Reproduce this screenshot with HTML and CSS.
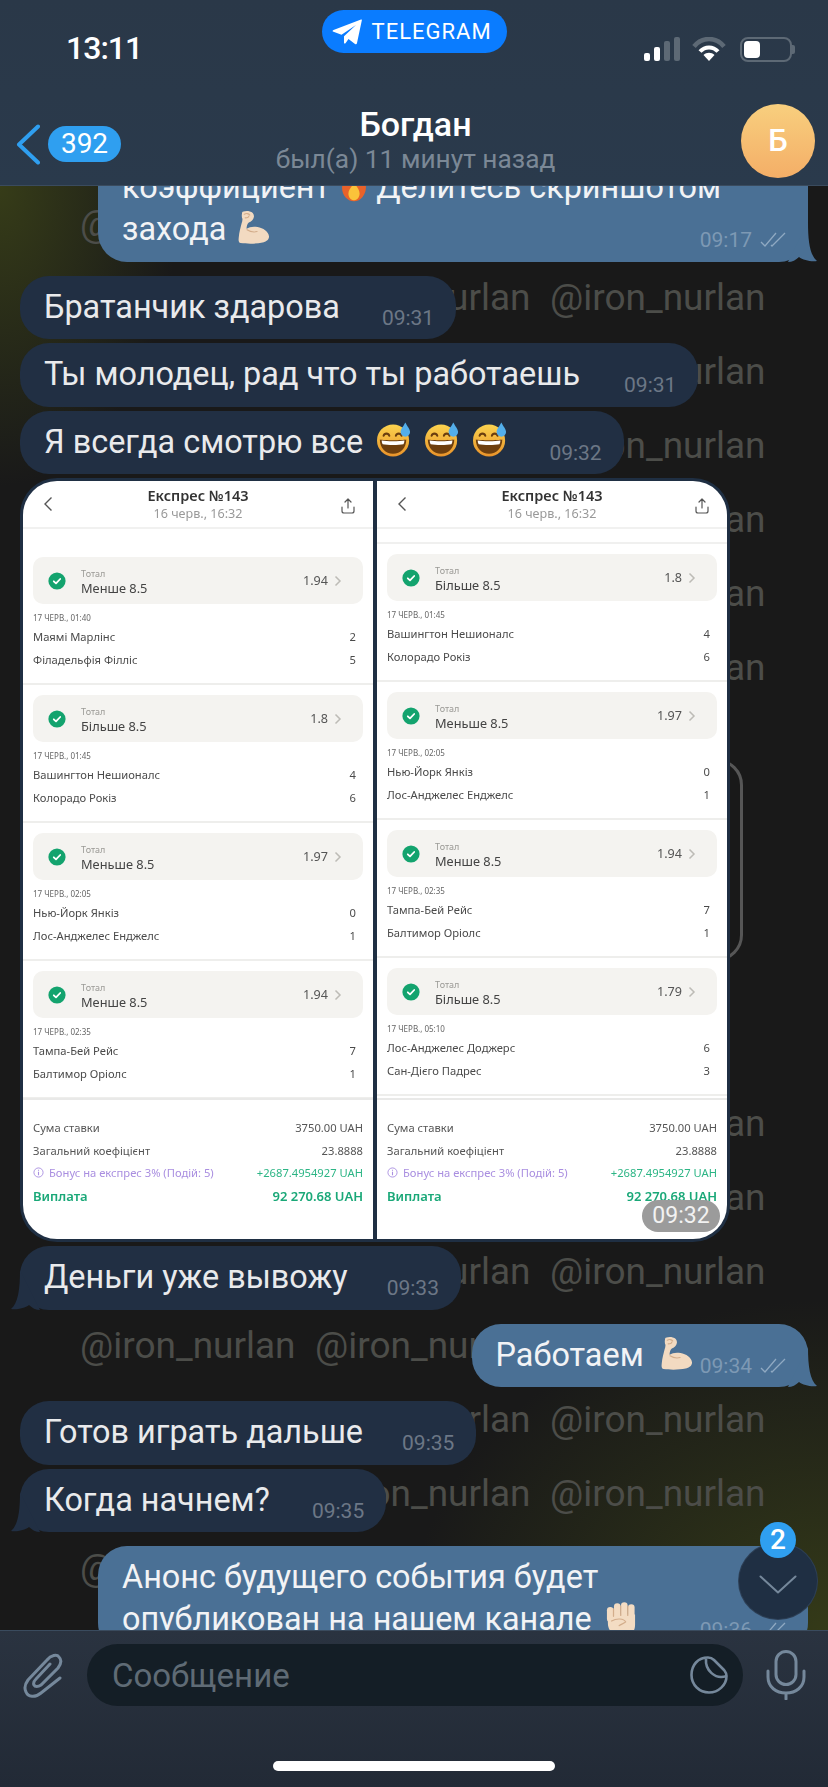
FILE: index.html

```html
<!DOCTYPE html>
<html lang="ru">
<head>
  <meta charset="UTF-8">
  <title>Богдан</title>
  <link rel="stylesheet" href="styles.css">
</head>
<body>
  <svg class="defs" width="0" height="0">
    <defs>
      <linearGradient id="face" x1="0" y1="0" x2="0" y2="1">
        <stop offset="0" stop-color="#fbd34f"/>
        <stop offset="1" stop-color="#e9932a"/>
      </linearGradient>
      <symbol id="muscle" viewBox="0 0 36 36">
        <path fill="#f2dac1" d="M6 3C7 1 11 0 15 1c3 .5 5 3 4.500 6-.5 3-3 5-5.500 6-1.500 1-2.500 4-2.500 7 3-2 7-3 12-2 6 1 12 5 12.500 10 .3 4-3 6-7 7-7 1.500-17 1.500-24 .5-2-.5-2.500-2-2-6 .5-6 2-11 3-15 1-3 1.500-5 .5-7-.5-3 0-5 1-7z"/>
        <path fill="none" stroke="#d3ad8b" stroke-width="1.200" stroke-linecap="round" d="M9 4c2-1 5-1 6 1M10 8c2 0 4 0 4-2M12 21c3 2 7 3 11 2"/>
      </symbol>
      <symbol id="fist" viewBox="0 0 32 40">
        <g fill="#f3dcc3">
          <rect x="1" y="5" width="7" height="16" rx="3.500"/>
          <rect x="8.500" y="1" width="7" height="16" rx="3.500"/>
          <rect x="16" y="0" width="7" height="16" rx="3.500"/>
          <rect x="23.500" y="2" width="7" height="16" rx="3.500"/>
          <path d="M2 13h29v11c0 6-3 9-5 11v5H8v-6c-4-3-6-7-6-12z"/>
        </g>
        <path fill="none" stroke="#d3ad8b" stroke-width="1.300" stroke-linecap="round" d="M8 7v8M15.700 4v10M23.200 4v10M6 20c5-3 13-3 15 1-2 2-5 2-7 4"/>
      </symbol>
      <symbol id="sweat" viewBox="0 0 36 36">
        <circle cx="17" cy="19" r="17" fill="url(#face)"/>
        <path fill="#6e3f0e" d="M3 18c4 1 24 1 28 0 0 9-6 15-14 15S3 27 3 18z"/>
        <path fill="#fff" d="M5 19c5 1 19 1 24 0 0 2-.5 3-1 4-5 1-17 1-22 0-.5-1-1-2-1-4z"/>
        <path fill="none" stroke="#6b3e0f" stroke-width="2.200" stroke-linecap="round" d="M7 14c1-3 5-3 6 0M20 14c1-3 5-3 6 0"/>
        <path fill="#53aeea" d="M30 0c2 4 5 7 5 10a5 5 0 0 1-10 0c0-3 3-6 5-10z"/>
      </symbol>
      <symbol id="fire" viewBox="0 0 30 36">
        <path fill="#e8622a" d="M15 0c2 6 9 9 12 16 3 9-3 20-12 20S0 26 3 17c1-3 3-5 4-7 1 3 2 4 4 5 1-5 1-10 4-15z"/>
        <path fill="#fbc33a" d="M15 15c1 4 6 7 6 13 0 4-3 7-6 7s-6-3-6-7c0-6 5-8 6-13z"/>
      </symbol>
      <symbol id="checks" viewBox="0 0 26 16">
        <path fill="none" stroke="currentColor" stroke-width="1.300" d="M1 10l4 4L16 1M11 13l1 1L25 1"/>
      </symbol>
      <symbol id="tail" viewBox="0 0 30 40">
        <path fill="currentColor" d="M20 0C20 20 22 33 29 39 23 40 15 38 11 35 8 38 4 40 0 40Z"/>
      </symbol>
      <symbol id="ok" viewBox="0 0 18 18">
        <circle cx="9" cy="9" r="8.600" fill="#13a36e"/>
        <path fill="none" stroke="#fff" stroke-width="1.800" stroke-linecap="round" stroke-linejoin="round" d="M5.800 9.300l2.200 2.100 4.200-4.400"/>
      </symbol>
      <symbol id="back-thin" viewBox="0 0 10 16">
        <path fill="none" stroke="#555" stroke-width="1.400" d="M8.500 1.500L2 8l6.500 6.500"/>
      </symbol>
      <symbol id="share" viewBox="0 0 14 16">
        <path fill="none" stroke="#555" stroke-width="1.200" stroke-linecap="round" stroke-linejoin="round" d="M7 10V1.500M4 4l3-3 3 3M1 9v4a2 2 0 0 0 2 2h8a2 2 0 0 0 2-2V9"/>
      </symbol>
      <symbol id="next" viewBox="0 0 8 12">
        <path fill="none" stroke="#bdbbb6" stroke-width="1.500" d="M1.500 1.500L6 6l-4.500 4.500"/>
      </symbol>
      <symbol id="info" viewBox="0 0 12 12">
        <circle cx="6" cy="6" r="5" fill="none" stroke="#a98ee0" stroke-width="1"/>
        <path fill="none" stroke="#a98ee0" stroke-width="1.200" d="M6 5.200V9M6 3v1.200"/>
      </symbol>
    </defs>
  </svg>

  <header class="top">
    <div class="status">
      <div class="clock">13:11</div>
      <div class="tg-pill">
        <svg class="plane" viewBox="0 0 30 26"><path fill="#fff" d="M29 .5c.8-.3 1 .4.800 1L25 24c-.2 1.200-1 1.500-2 .9l-6.500-5-3 4.300c-.6.700-1.500.4-1.500-.5v-6.500L24 6 9.500 15.800l-8-3c-1.200-.5-1.200-1.400 0-1.900z"/></svg>
        TELEGRAM
      </div>
      <div class="indicators">
        <div class="bars"><i class="on b1"></i><i class="on b2"></i><i class="b3"></i><i class="b4"></i></div>
        <svg class="wifi" viewBox="0 0 34 24">
          <path fill="none" stroke="#5d6975" stroke-width="4.500" d="M2 9.500C10-.5 24-.5 32 9.500"/>
          <path fill="none" stroke="#fff" stroke-width="4" d="M8 14.500c5-5.500 13-5.500 18 0"/>
          <path fill="#fff" d="M17 24l-5.500-6c3-3 8-3 11 0z"/>
        </svg>
        <div class="battery"><span></span></div>
      </div>
    </div>
    <div class="nav">
      <div class="back">
        <svg class="back-arrow" viewBox="0 0 24 41"><path fill="none" stroke="#2f9ff0" stroke-width="4" stroke-linecap="round" stroke-linejoin="round" d="M22 2.500L3 20.500l19 18"/></svg>
        <span class="counter">392</span>
      </div>
      <div class="peer">
        <div class="peer-name">Богдан</div>
        <div class="peer-seen">был(а) 11 минут назад</div>
      </div>
      <div class="avatar">Б</div>
    </div>
  </header>

  <main class="chat">
    <div class="marks">
      <div class="mark-row"><span>@iron_nurlan</span></div>
      <div class="mark-row"><span class="c2">@iron_nurlan</span><span>@iron_nurlan</span></div>
      <div class="mark-row"><span class="c3">@iron_nurlan</span></div>
      <div class="mark-row"><span class="c3">@iron_nurlan</span></div>
      <div class="mark-row"><span class="c3">@iron_nurlan</span></div>
      <div class="mark-row"><span class="c3">@iron_nurlan</span></div>
      <div class="mark-row"><span class="c3">@iron_nurlan</span></div>
      <div class="mark-frame"></div>
      <div class="mark-row after-frame"><span class="c3">@iron_nurlan</span></div>
      <div class="mark-row"><span class="c3">@iron_nurlan</span></div>
      <div class="mark-row"><span class="c2">@iron_nurlan</span><span>@iron_nurlan</span></div>
      <div class="mark-row"><span>@iron_nurlan</span><span>@iron_nurlan</span></div>
      <div class="mark-row"><span class="c2">@iron_nurlan</span><span>@iron_nurlan</span></div>
      <div class="mark-row"><span class="c2">@iron_nurlan</span><span>@iron_nurlan</span></div>
      <div class="mark-row"><span>@iron_nurlan</span></div>
    </div>

    <div class="msgs">
      <div class="msg out wide first">
        <div class="msg-text">коэффициент <svg class="emo fire"><use href="#fire"/></svg> Делитесь скриншотом<br>захода <svg class="emo arm"><use href="#muscle"/></svg></div>
        <div class="meta">09:17 <svg class="ticks"><use href="#checks"/></svg></div>
        <svg class="tail"><use href="#tail"/></svg>
      </div>

      <div class="msg in gap-big">
        <div class="msg-text">Братанчик здарова</div>
        <div class="meta">09:31</div>
      </div>
      <div class="msg in">
        <div class="msg-text">Ты молодец, рад что ты работаешь</div>
        <div class="meta roomy">09:31</div>
      </div>
      <div class="msg in">
        <div class="msg-text">Я всегда смотрю все <svg class="emo sw"><use href="#sweat"/></svg> <svg class="emo sw"><use href="#sweat"/></svg> <svg class="emo sw"><use href="#sweat"/></svg></div>
        <div class="meta">09:32</div>
      </div>

      <div class="album">
        <section class="panel">
          <div class="panel-head">
            <svg class="ico-back"><use href="#back-thin"/></svg>
            <div class="panel-title"><b>Експрес №143</b><span>16 черв., 16:32</span></div>
            <svg class="ico-share"><use href="#share"/></svg>
          </div>
          <div class="bets first-gap">
            <div class="bet">
              <div class="bet-card"><svg class="ico-ok"><use href="#ok"/></svg><div class="bet-name"><small>Тотал</small>Менше 8.5</div><div class="bet-odd">1.94</div><svg class="ico-next"><use href="#next"/></svg></div>
              <div class="bet-date">17 ЧЕРВ., 01:40</div>
              <div class="team"><span>Маямі Марлінс</span><span>2</span></div>
              <div class="team"><span>Філадельфія Філліс</span><span>5</span></div>
            </div>
            <div class="bet">
              <div class="bet-card"><svg class="ico-ok"><use href="#ok"/></svg><div class="bet-name"><small>Тотал</small>Більше 8.5</div><div class="bet-odd">1.8</div><svg class="ico-next"><use href="#next"/></svg></div>
              <div class="bet-date">17 ЧЕРВ., 01:45</div>
              <div class="team"><span>Вашингтон Нешионалс</span><span>4</span></div>
              <div class="team"><span>Колорадо Рокіз</span><span>6</span></div>
            </div>
            <div class="bet">
              <div class="bet-card"><svg class="ico-ok"><use href="#ok"/></svg><div class="bet-name"><small>Тотал</small>Меньше 8.5</div><div class="bet-odd">1.97</div><svg class="ico-next"><use href="#next"/></svg></div>
              <div class="bet-date">17 ЧЕРВ., 02:05</div>
              <div class="team"><span>Нью-Йорк Янкіз</span><span>0</span></div>
              <div class="team"><span>Лос-Анджелес Енджелс</span><span>1</span></div>
            </div>
            <div class="bet">
              <div class="bet-card"><svg class="ico-ok"><use href="#ok"/></svg><div class="bet-name"><small>Тотал</small>Менше 8.5</div><div class="bet-odd">1.94</div><svg class="ico-next"><use href="#next"/></svg></div>
              <div class="bet-date">17 ЧЕРВ., 02:35</div>
              <div class="team"><span>Тампа-Бей Рейс</span><span>7</span></div>
              <div class="team"><span>Балтимор Оріолс</span><span>1</span></div>
            </div>
          </div>
          <div class="summary">
            <div class="sum-row"><span>Сума ставки</span><span>3750.00 UAH</span></div>
            <div class="sum-row"><span>Загальний коефіцієнт</span><span>23.8888</span></div>
            <div class="sum-row bonus"><span><svg class="ico-info"><use href="#info"/></svg>Бонус на експрес 3% (Подій: 5)</span><em>+2687.4954927 UAH</em></div>
            <div class="sum-row total"><span>Виплата</span><span>92 270.68 UAH</span></div>
          </div>
        </section>

        <section class="panel">
          <div class="panel-head">
            <svg class="ico-back"><use href="#back-thin"/></svg>
            <div class="panel-title"><b>Експрес №143</b><span>16 черв., 16:32</span></div>
            <svg class="ico-share"><use href="#share"/></svg>
          </div>
          <div class="bets second-gap">
            <div class="bet">
              <div class="bet-card"><svg class="ico-ok"><use href="#ok"/></svg><div class="bet-name"><small>Тотал</small>Більше 8.5</div><div class="bet-odd">1.8</div><svg class="ico-next"><use href="#next"/></svg></div>
              <div class="bet-date">17 ЧЕРВ., 01:45</div>
              <div class="team"><span>Вашингтон Нешионалс</span><span>4</span></div>
              <div class="team"><span>Колорадо Рокіз</span><span>6</span></div>
            </div>
            <div class="bet">
              <div class="bet-card"><svg class="ico-ok"><use href="#ok"/></svg><div class="bet-name"><small>Тотал</small>Меньше 8.5</div><div class="bet-odd">1.97</div><svg class="ico-next"><use href="#next"/></svg></div>
              <div class="bet-date">17 ЧЕРВ., 02:05</div>
              <div class="team"><span>Нью-Йорк Янкіз</span><span>0</span></div>
              <div class="team"><span>Лос-Анджелес Енджелс</span><span>1</span></div>
            </div>
            <div class="bet">
              <div class="bet-card"><svg class="ico-ok"><use href="#ok"/></svg><div class="bet-name"><small>Тотал</small>Менше 8.5</div><div class="bet-odd">1.94</div><svg class="ico-next"><use href="#next"/></svg></div>
              <div class="bet-date">17 ЧЕРВ., 02:35</div>
              <div class="team"><span>Тампа-Бей Рейс</span><span>7</span></div>
              <div class="team"><span>Балтимор Оріолс</span><span>1</span></div>
            </div>
            <div class="bet">
              <div class="bet-card"><svg class="ico-ok"><use href="#ok"/></svg><div class="bet-name"><small>Тотал</small>Більше 8.5</div><div class="bet-odd">1.79</div><svg class="ico-next"><use href="#next"/></svg></div>
              <div class="bet-date">17 ЧЕРВ., 05:10</div>
              <div class="team"><span>Лос-Анджелес Доджерс</span><span>6</span></div>
              <div class="team"><span>Сан-Дієго Падрес</span><span>3</span></div>
            </div>
          </div>
          <div class="summary">
            <div class="sum-row"><span>Сума ставки</span><span>3750.00 UAH</span></div>
            <div class="sum-row"><span>Загальний коефіцієнт</span><span>23.8888</span></div>
            <div class="sum-row bonus"><span><svg class="ico-info"><use href="#info"/></svg>Бонус на експрес 3% (Подій: 5)</span><em>+2687.4954927 UAH</em></div>
            <div class="sum-row total"><span>Виплата</span><span>92 270.68 UAH</span></div>
          </div>
        </section>
        <div class="album-time">09:32</div>
      </div>

      <div class="msg in">
        <div class="msg-text">Деньги уже вывожу</div>
        <div class="meta tight">09:33</div>
        <svg class="tail"><use href="#tail"/></svg>
      </div>

      <div class="msg out gap-big">
        <div class="msg-text">Работаем <svg class="emo arm mg"><use href="#muscle"/></svg></div>
        <div class="meta">09:34 <svg class="ticks"><use href="#checks"/></svg></div>
        <svg class="tail"><use href="#tail"/></svg>
      </div>

      <div class="msg in gap-big">
        <div class="msg-text">Готов играть дальше</div>
        <div class="meta tight">09:35</div>
      </div>
      <div class="msg in">
        <div class="msg-text">Когда начнем?</div>
        <div class="meta">09:35</div>
        <svg class="tail"><use href="#tail"/></svg>
      </div>

      <div class="msg out wide gap-big">
        <div class="msg-text">Анонс будущего события будет<br>опубликован на нашем канале <svg class="emo fist"><use href="#fist"/></svg></div>
        <div class="meta">09:36 <svg class="ticks"><use href="#checks"/></svg></div>
      </div>
    </div>

    <div class="to-bottom">
      <span class="to-bottom-count">2</span>
      <svg class="to-bottom-arrow" viewBox="0 0 38 19"><path fill="none" stroke="#75889b" stroke-width="2" stroke-linecap="round" stroke-linejoin="round" d="M1.500 1.500L19 17.500 36.500 1.500"/></svg>
    </div>
  </main>

  <footer class="composer">
    <div class="composer-row">
      <svg class="ico-clip" viewBox="0 0 40 46"><path fill="none" stroke="#75889b" stroke-width="3" stroke-linecap="round" d="M37 26L18 41c-6 5-13 4-15-1-2-4-1-8 2-12L24 8c4-5 10-6 12-3 3 3 2 7-1 11L18 33c-3 2-6 2-7 0-1-2 0-4 2-6l14-15"/></svg>
      <div class="field">
        <span class="field-hint">Сообщение</span>
        <svg class="ico-sticker" viewBox="0 0 38 38"><path fill="none" stroke="#75889b" stroke-width="2.600" stroke-linejoin="round" d="M18 1.500C8 1.500 1.500 9 1.500 19c0 10 8 17.500 17.500 17.500S36.500 29 36.500 20c0-3-1-4-2.500-6L24 4c-2-2-4-2.500-6-2.500zM16 3c-1 11 9 21 20.500 17"/></svg>
      </div>
      <svg class="ico-mic" viewBox="0 0 40 50"><g fill="none" stroke="#75889b" stroke-width="3" stroke-linecap="round"><rect x="10" y="1.500" width="20" height="33" rx="10"/><path d="M2 21v6c0 10 8 16 18 16s18-6 18-16v-6M20 43v6"/></g></svg>
    </div>
    <div class="home-bar"></div>
  </footer>
</body>
</html>
```

FILE: styles.css

```css
* {
  box-sizing: border-box;
}
html, body {
  margin: 0;
  height: 1787px;
  overflow: hidden;
}
body {
  width: 828px;
  display: flex;
  flex-direction: column;
  background-color: #191919;
  font-family: Roboto, "Noto Sans", sans-serif;
  color: #fff;
}
.defs {
  position: absolute;
}

/* top bar */
.top {
  flex: none;
  height: 186px;
  padding-top: 10px;
  background: linear-gradient(180deg, #2a3848, #2a3a4c);
  border-bottom: 1px solid #3a4b5e;
  z-index: 2;
}
.status {
  height: 60px;
  display: grid;
  grid-template-columns: 1fr auto 1fr;
}
.clock {
  font-size: 32px;
  font-weight: 500;
  letter-spacing: -1px;
  line-height: 32px;
  padding: 22px 0 0 66px;
}
.tg-pill {
  width: 185px;
  height: 43px;
  background-color: #0a7cff;
  border-radius: 22px;
  display: flex;
  align-items: center;
  gap: 10px;
  padding-left: 10px;
  font-size: 22px;
  letter-spacing: 1px;
}
.plane {
  width: 30px;
  height: 26px;
}
.indicators {
  display: flex;
  justify-content: flex-end;
  align-items: flex-start;
  padding: 27px 36px 0 0;
  gap: 12px;
}
.bars {
  display: flex;
  align-items: flex-end;
  gap: 4px;
  height: 24px;
}
.bars i {
  width: 6px;
  border-radius: 2px;
  background-color: #5d6975;
}
.bars i.on {
  background-color: #fff;
}
.b1 { height: 8px; }
.b2 { height: 14px; }
.b3 { height: 20px; }
.b4 { height: 24px; }
.wifi {
  width: 34px;
  height: 24px;
  margin-right: 2px;
}
.battery {
  position: relative;
  width: 52px;
  height: 25px;
  border: 2px solid #5d6975;
  border-radius: 8px;
  padding: 2px;
}
.battery::after {
  content: "";
  position: absolute;
  right: -5px;
  top: 6px;
  width: 3px;
  height: 9px;
  border-radius: 0 2px 2px 0;
  background-color: #5d6975;
}
.battery span {
  display: block;
  width: 16px;
  height: 17px;
  background-color: #fff;
  border-radius: 4px;
}
.nav {
  margin-top: 34px;
  height: 74px;
  display: grid;
  grid-template-columns: 1fr auto 1fr;
  padding: 0 13px 0 16px;
}
.back {
  display: flex;
  align-items: center;
  gap: 8px;
  height: 74px;
  margin-top: 3px;
}
.back-arrow {
  width: 24px;
  height: 41px;
}
.counter {
  width: 73px;
  height: 36px;
  border-radius: 18px;
  background-color: #2f9ff0;
  font-size: 28px;
  line-height: 36px;
  text-align: center;
}
.peer {
  text-align: center;
}
.peer-name {
  font-size: 34px;
  font-weight: 500;
  line-height: 40px;
}
.peer-seen {
  font-size: 26.300px;
  line-height: 32px;
  margin-top: -1px;
  color: #7b8896;
}
.avatar {
  justify-self: end;
  width: 74px;
  height: 74px;
  border-radius: 50%;
  background: linear-gradient(180deg, #f8cf7e, #f4ae67);
  font-size: 31px;
  font-weight: 500;
  line-height: 74px;
  text-align: center;
}

/* chat */
.chat {
  flex: 1;
  position: relative;
  overflow: hidden;
  background:
    radial-gradient(ellipse 180px 300px at 0 0, #363c18, rgba(54, 60, 24, 0)),
    radial-gradient(ellipse 420px 330px at 100% 100%, #343a18, rgba(47, 53, 24, 0)),
    #191919;
}
.marks {
  position: absolute;
  top: 1px;
  left: 80px;
  right: 0;
  font-size: 37px;
  color: #4c4d49;
}
.mark-row {
  height: 74px;
  line-height: 74px;
  display: grid;
  grid-template-columns: 212px 212px 212px;
  column-gap: 23px;
  white-space: nowrap;
}
.c2 {
  grid-column: 2;
}
.c3 {
  grid-column: 3;
}
.mark-frame {
  margin-top: 54px;
  width: 663px;
  height: 202px;
  border: 3px solid #565656;
  border-radius: 26px;
}
.after-frame {
  margin-top: 126px;
}
.msgs {
  position: relative;
  display: flex;
  flex-direction: column;
  align-items: flex-start;
  gap: 4px;
  padding: 0 20px;
}
.msg {
  position: relative;
  display: flex;
  align-items: flex-end;
  padding: 10px 22px 11.500px 24px;
  border-radius: 29px;
  font-size: 32.400px;
  line-height: 42px;
}
.msg-text {
  white-space: nowrap;
}
.msg.in {
  background-color: #212f43;
  color: #e9eaec;
}
.msg.out {
  align-self: flex-end;
  background-color: #4a7095;
  color: #f2f3f5;
}
.msg.wide {
  display: block;
  width: 710px;
}
.msg.wide .meta {
  justify-content: flex-end;
  margin-top: -22px;
}
.msg.first {
  margin-top: -30px;
}
.gap-big {
  margin-top: 10px;
}
.meta {
  flex: none;
  display: flex;
  align-items: center;
  gap: 8px;
  margin-left: 42px;
  margin-bottom: -2px;
  font-size: 21px;
  line-height: 24px;
  color: #6c7786;
}
.meta.roomy {
  margin-left: 44px;
}
.meta.tight {
  margin-left: 39px;
}
.msg.out .meta {
  color: #7d99b4;
  margin-left: 8px;
}
.ticks {
  width: 26px;
  height: 16px;
  color: #8fa9c2;
}
.emo {
  width: 35px;
  height: 35px;
  vertical-align: -4px;
  margin-left: 2px;
}
.emo.arm {
  width: 33px;
  height: 34px;
}
.emo.mg {
  margin-left: 7px;
}
.emo.sw {
  width: 34px;
  margin-left: 6px;
}
.emo.fire {
  width: 28px;
}
.emo.fist {
  width: 30px;
  height: 38px;
  vertical-align: -10px;
  margin-left: 6px;
}
.tail {
  position: absolute;
  right: -10px;
  bottom: 0;
  width: 30px;
  height: 40px;
  color: #4a7095;
}
.msg.in .tail {
  right: auto;
  left: -10px;
  transform: scaleX(-1);
  color: #212f43;
}

/* album with two screenshots */
.album {
  position: relative;
  width: 710px;
  height: 764px;
  padding: 3px;
  display: grid;
  grid-template-columns: 350px 350px;
  gap: 4px;
  background-color: #1f2f43;
  border-radius: 37px;
}
.panel {
  background-color: #fff;
  color: #444;
  overflow: hidden;
  font-family: "Noto Sans", sans-serif;
  height: 758px;
  filter: blur(0.3px);
}
.panel:first-child {
  border-radius: 34px 0 0 34px;
}
.panel:nth-child(2) {
  border-radius: 0 34px 34px 0;
}
.panel-head {
  height: 48px;
  display: grid;
  grid-template-columns: 60px 1fr 60px;
  border-bottom: 2px solid #f1f1f0;
  padding-top: 5px;
}
.ico-back {
  width: 10px;
  height: 16px;
  margin: 10px 0 0 20px;
}
.ico-share {
  width: 14px;
  height: 16px;
  justify-self: end;
  margin: 12px 18px 0 0;
}
.panel-title {
  text-align: center;
}
.panel-title b {
  display: block;
  font-size: 14.500px;
  line-height: 19px;
  font-weight: 600;
  color: #333;
}
.panel-title span {
  display: block;
  font-size: 12.600px;
  line-height: 17px;
  color: #999;
}
.bets {
  height: 569px;
  overflow: hidden;
}
.first-gap {
  padding-top: 18px;
}
.second-gap {
  padding-top: 13px;
}
.second-gap::before {
  content: "";
  display: block;
  height: 2px;
  background-color: #f0f0ef;
}
.bet {
  height: 138px;
  padding: 10px 10px 0;
  border-bottom: 2px solid #eeeeec;
}
.bet-card {
  height: 47px;
  border-radius: 10px;
  background-color: #f4f3f0;
  display: flex;
  align-items: center;
  padding: 0 21px 0 15px;
}
.ico-ok {
  flex: none;
  width: 18px;
  height: 18px;
  margin-right: 15px;
}
.bet-name {
  flex: 1;
  padding-top: 3px;
  font-size: 12.800px;
  line-height: 17px;
  color: #444;
}
.bet-name small {
  display: block;
  font-size: 9px;
  line-height: 13px;
  color: #9b9a96;
}
.bet-odd {
  font-size: 12.600px;
  color: #555;
}
.ico-next {
  flex: none;
  width: 8px;
  height: 12px;
  margin-left: 6px;
}
.bet-date {
  margin-top: 7px;
  font-size: 8px;
  line-height: 14px;
  color: #666;
}
.team {
  display: flex;
  justify-content: space-between;
  padding: 1px 7px 0 0;
  font-size: 11.200px;
  line-height: 22px;
  color: #4a4a4a;
}
.summary {
  border-top: 2px solid #e9e9e8;
  padding: 17px 10px 0;
}
.sum-row {
  display: flex;
  justify-content: space-between;
  font-size: 11.200px;
  line-height: 22.500px;
  color: #555;
}
.sum-row.bonus {
  color: #a98ee0;
}
.sum-row.bonus em {
  font-style: normal;
  color: #2cb585;
}
.ico-info {
  width: 11px;
  height: 11px;
  margin-right: 5px;
  vertical-align: -1px;
}
.sum-row.total {
  font-size: 13px;
  font-weight: 600;
  color: #1aa878;
}
.album-time {
  position: absolute;
  right: 10px;
  bottom: 10px;
  width: 78px;
  height: 32px;
  border-radius: 16px;
  background-color: #9b9b9b;
  color: #f2f2f2;
  font-size: 23px;
  line-height: 32px;
  text-align: center;
}

/* scroll down */
.to-bottom {
  position: absolute;
  right: 11px;
  top: 1357px;
  width: 78px;
  height: 76px;
  border-radius: 50%;
  background-color: #1f2f43;
  box-shadow: 0 0 0 1px #2d3f55;
}
.to-bottom-count {
  position: absolute;
  top: -21px;
  left: 21px;
  width: 36px;
  height: 36px;
  border-radius: 50%;
  background-color: #2f9ff0;
  font-size: 28px;
  font-weight: 500;
  line-height: 36px;
  text-align: center;
}
.to-bottom-arrow {
  position: absolute;
  left: 20px;
  top: 32px;
  width: 38px;
  height: 19px;
}

/* bottom input */
.composer {
  flex: none;
  height: 157px;
  background: linear-gradient(180deg, #2a3340, #222a36);
  border-top: 1px solid #3a4b5e;
  z-index: 2;
  padding-top: 12px;
}
.composer-row {
  height: 64px;
  display: flex;
  align-items: center;
  padding-left: 23px;
}
.ico-clip {
  width: 40px;
  height: 46px;
}
.field {
  width: 656px;
  height: 62px;
  margin-left: 24px;
  padding: 0 15px 0 25px;
  border-radius: 31px;
  background-color: #141e26;
  display: flex;
  align-items: center;
  justify-content: space-between;
}
.field-hint {
  font-size: 33px;
  color: #5f6b75;
}
.ico-sticker {
  width: 38px;
  height: 38px;
}
.ico-mic {
  width: 40px;
  height: 50px;
  margin-left: 23px;
}
.home-bar {
  width: 282px;
  height: 10px;
  margin: 54px auto 0;
  border-radius: 5px;
  background-color: #fff;
}
```
